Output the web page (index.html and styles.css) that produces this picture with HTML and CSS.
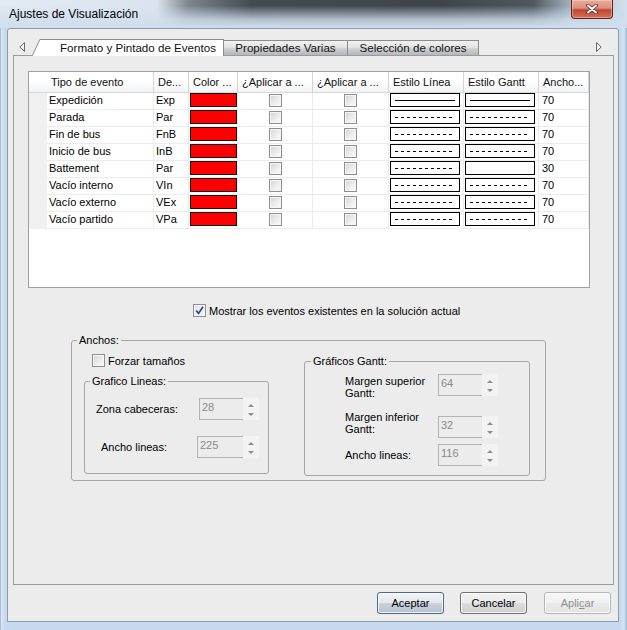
FILE: index.html
```html
<!DOCTYPE html>
<html lang="es">
<head>
<meta charset="utf-8">
<title>Ajustes de Visualización</title>
<link rel="stylesheet" href="styles.css">
</head>
<body>
<div class="window">
  <div class="titlebar">
    <span class="title">Ajustes de Visualización</span>
    <div class="close">
      <svg width="12" height="10" viewBox="0 0 12 10"><path d="M2 1.5 L10 8.5 M10 1.5 L2 8.5" stroke="#5b2b24" stroke-width="3.6" stroke-linecap="round"/><path d="M2 1.5 L10 8.5 M10 1.5 L2 8.5" stroke="#fff" stroke-width="2" stroke-linecap="round"/></svg>
    </div>
  </div>
  <div class="client">
    <div class="tabstrip">
      <svg class="arrow-l" width="6" height="10" viewBox="0 0 6 10"><path d="M5.5 0.5 L0.8 5 L5.5 9.5 Z" fill="#f4f4f4" stroke="#6a6a6a"/></svg>
      <div class="tabs">
        <svg class="slant" width="8" height="17" viewBox="0 0 8 17"><polygon points="0,17 8,0 8,17" fill="#fff"/><line x1="0.3" y1="16.8" x2="7.8" y2="0.5" stroke="#8c8c8c"/></svg>
        <div class="tab active">Formato y Pintado de Eventos</div>
        <div class="tab t2">Propiedades Varias</div>
        <div class="tab t3">Selección de colores</div>
      </div>
      <svg class="arrow-r" width="6" height="10" viewBox="0 0 6 10"><path d="M0.5 0.5 L5.2 5 L0.5 9.5 Z" fill="#f4f4f4" stroke="#6a6a6a"/></svg>
    </div>
    <div class="panel">
      <div class="grid">
        <div class="hrow">
          <div class="rh"></div>
          <div>Tipo de evento</div>
          <div>De...</div>
          <div>Color ...</div>
          <div>¿Aplicar a ...</div>
          <div>¿Aplicar a ...</div>
          <div>Estilo Línea</div>
          <div>Estilo Gantt</div>
          <div>Ancho...</div>
        </div>
        <div class="row">
          <div class="rh"></div><div class="txt">Expedición</div><div class="txt">Exp</div>
          <div><span class="swatch"></span></div>
          <div class="chk"><span class="cb"></span></div><div class="chk"><span class="cb"></span></div>
          <div><span class="lstyle"><span class="solid"></span></span></div>
          <div><span class="lstyle"><span class="solid"></span></span></div>
          <div class="num">70</div>
        </div>
        <div class="row">
          <div class="rh"></div><div class="txt">Parada</div><div class="txt">Par</div>
          <div><span class="swatch"></span></div>
          <div class="chk"><span class="cb"></span></div><div class="chk"><span class="cb"></span></div>
          <div><span class="lstyle"><span class="dash"></span></span></div>
          <div><span class="lstyle"><span class="dash"></span></span></div>
          <div class="num">70</div>
        </div>
        <div class="row">
          <div class="rh"></div><div class="txt">Fin de bus</div><div class="txt">FnB</div>
          <div><span class="swatch"></span></div>
          <div class="chk"><span class="cb"></span></div><div class="chk"><span class="cb"></span></div>
          <div><span class="lstyle"><span class="dash"></span></span></div>
          <div><span class="lstyle"><span class="dash"></span></span></div>
          <div class="num">70</div>
        </div>
        <div class="row">
          <div class="rh"></div><div class="txt">Inicio de bus</div><div class="txt">InB</div>
          <div><span class="swatch"></span></div>
          <div class="chk"><span class="cb"></span></div><div class="chk"><span class="cb"></span></div>
          <div><span class="lstyle"><span class="dash"></span></span></div>
          <div><span class="lstyle"><span class="dash"></span></span></div>
          <div class="num">70</div>
        </div>
        <div class="row">
          <div class="rh"></div><div class="txt">Battement</div><div class="txt">Par</div>
          <div><span class="swatch"></span></div>
          <div class="chk"><span class="cb"></span></div><div class="chk"><span class="cb"></span></div>
          <div><span class="lstyle"><span class="dash"></span></span></div>
          <div><span class="lstyle"></span></div>
          <div class="num">30</div>
        </div>
        <div class="row">
          <div class="rh"></div><div class="txt">Vacío interno</div><div class="txt">VIn</div>
          <div><span class="swatch"></span></div>
          <div class="chk"><span class="cb"></span></div><div class="chk"><span class="cb"></span></div>
          <div><span class="lstyle"><span class="dash"></span></span></div>
          <div><span class="lstyle"><span class="dash"></span></span></div>
          <div class="num">70</div>
        </div>
        <div class="row">
          <div class="rh"></div><div class="txt">Vacío externo</div><div class="txt">VEx</div>
          <div><span class="swatch"></span></div>
          <div class="chk"><span class="cb"></span></div><div class="chk"><span class="cb"></span></div>
          <div><span class="lstyle"><span class="dash"></span></span></div>
          <div><span class="lstyle"><span class="dash"></span></span></div>
          <div class="num">70</div>
        </div>
        <div class="row">
          <div class="rh"></div><div class="txt">Vacío partido</div><div class="txt">VPa</div>
          <div><span class="swatch"></span></div>
          <div class="chk"><span class="cb"></span></div><div class="chk"><span class="cb"></span></div>
          <div><span class="lstyle"><span class="dash"></span></span></div>
          <div><span class="lstyle"><span class="dash"></span></span></div>
          <div class="num">70</div>
        </div>
      </div>

      <div class="show">
        <span class="cb checked"><svg width="11" height="11" viewBox="0 0 11 11"><path d="M2.2 5.6 L4.6 8.4 L9 1.8" fill="none" stroke="#33479a" stroke-width="1.7"/></svg></span>
        <span>Mostrar los eventos existentes en la solución actual</span>
      </div>

      <div class="group anchos">
        <div class="legend">Anchos:</div>
        <div class="anchos-body">
          <div class="leftcol">
            <div class="forzar"><span class="cb"></span><span>Forzar tamaños</span></div>
            <div class="group lineas">
              <div class="legend">Grafico Lineas:</div>
              <div class="frow r1">
                <span class="lbl">Zona cabeceras:</span>
                <div class="spin"><span class="sbox w44">28</span><svg class="sbtn" width="16" height="22" viewBox="0 0 16 22"><path d="M5 9 L8 6 L11 9 Z M5 15 L11 15 L8 18 Z" fill="#8d8d8d"/></svg></div>
              </div>
              <div class="frow r2">
                <span class="lbl">Ancho lineas:</span>
                <div class="spin"><span class="sbox w46">225</span><svg class="sbtn" width="16" height="22" viewBox="0 0 16 22"><path d="M5 9 L8 6 L11 9 Z M5 15 L11 15 L8 18 Z" fill="#8d8d8d"/></svg></div>
              </div>
            </div>
          </div>
          <div class="group gantt">
            <div class="legend">Gráficos Gantt:</div>
            <div class="grow g1">
              <span class="glbl">Margen superior<br>Gantt:</span>
              <div class="spin"><span class="sbox w44">64</span><svg class="sbtn" width="16" height="22" viewBox="0 0 16 22"><path d="M5 9 L8 6 L11 9 Z M5 15 L11 15 L8 18 Z" fill="#8d8d8d"/></svg></div>
            </div>
            <div class="grow g2">
              <span class="glbl">Margen inferior<br>Gantt:</span>
              <div class="spin"><span class="sbox w44">32</span><svg class="sbtn" width="16" height="22" viewBox="0 0 16 22"><path d="M5 9 L8 6 L11 9 Z M5 15 L11 15 L8 18 Z" fill="#8d8d8d"/></svg></div>
            </div>
            <div class="grow g3">
              <span class="glbl">Ancho lineas:</span>
              <div class="spin"><span class="sbox w44">116</span><svg class="sbtn" width="16" height="22" viewBox="0 0 16 22"><path d="M5 9 L8 6 L11 9 Z M5 15 L11 15 L8 18 Z" fill="#8d8d8d"/></svg></div>
            </div>
          </div>
        </div>
      </div>
    </div>
    <div class="buttons">
      <div class="btn default">Aceptar</div>
      <div class="btn cancel">Cancelar</div>
      <div class="btn disabled">Apli<u>c</u>ar</div>
    </div>
  </div>
</div>
</body>
</html>
```
FILE: styles.css
```css
* { box-sizing: border-box; }
html, body { margin: 0; padding: 0; }
body {
  width: 627px; height: 630px; overflow: hidden;
  font-family: "Liberation Sans", Arial, sans-serif;
  font-size: 11px; color: #000;
  background: #c4d8ed;
}
.window {
  width: 627px; height: 630px;
  display: flex; flex-direction: column;
  background: linear-gradient(to right, #7d95b0 0, #dbe8f5 1px, #c6d9ee 5px, #c6d9ee 620px, #d4e3f2 624px, #9fb4ca 627px);
}

/* title bar */
.titlebar {
  height: 28px; flex: none;
  display: flex; align-items: flex-start;
  background:
    linear-gradient(to bottom, rgba(208,222,237,0) 0, rgba(208,222,237,0) 20%, rgba(208,222,237,.8) 70%, #d0deed 100%),
    linear-gradient(to right, #e2eaf3 0, #dbe4ee 25%, #7d8790 30%, #434b53 40%, #3d444c 70%, #4f5860 85%, #a4b2c0 91%, #d3e0ed 100%);
}
.title {
  margin-left: 9px; line-height: 28px;
  font-size: 12px; color: #000;
}
.close {
  margin: 0 14px 0 auto;
  width: 42px; height: 19px;
  border: 1px solid #5b241b; border-top: none;
  border-radius: 0 0 4px 4px;
  background: linear-gradient(#e9ab9d 0, #dc8f7f 45%, #c24530 55%, #d0705a 100%);
  box-shadow: inset 0 0 0 1px rgba(255,220,210,.45);
  display: flex; align-items: center; justify-content: center;
}

/* client area */
.client {
  flex: 1;
  margin: 0 8px 8px 7px;
  background: #ececec;
  border: 1px solid #8d9aa8;
  border-radius: 3px 3px 0 0;
  display: flex; flex-direction: column;
}
.tabstrip {
  height: 26px; flex: none;
  display: flex; align-items: flex-end;
}
.arrow-l { margin: 0 0 3px 11px; flex: none; }
.arrow-r { margin: 0 16px 3px auto; flex: none; }
.tabs {
  display: flex; align-items: flex-end;
  margin-left: 7px;
  position: relative; z-index: 1;
}
.slant { display: block; margin-bottom: -1px; flex: none; }
.tab {
  font-size: 11.6px; white-space: nowrap;
  border-top: 1px solid #8c8c8c; border-right: 1px solid #8c8c8c;
  color: #111;
}
.tab.active {
  width: 184px; height: 17px; margin-bottom: -1px;
  background: #fff;
  padding-left: 20px; line-height: 15px;
}
.tab.t2, .tab.t3 {
  height: 15px; line-height: 14px; text-align: center;
  background: linear-gradient(#f1f1f1 0, #e4e4e4 45%, #cfd1d3 55%, #b3b7bb 100%);
}
.tab.t2 { width: 124px; }
.tab.t3 { width: 131px; }

.panel {
  height: 530px; flex: none;
  margin: 0 4px 0 5px;
  border: 1px solid #9b9b9b;
  background: #ececec;
}

/* grid */
.grid {
  margin: 15px 0 0 14px;
  width: 562px; height: 217px;
  border: 1px solid #a0a0a0;
  background: #fff;
}
.hrow, .row {
  display: grid;
  grid-template-columns: 18px 107px 35px 49px 75px 76px 75px 75px 50px;
}
.hrow {
  height: 21px;
  border-bottom: 1px solid #d8d8d8;
  background: linear-gradient(#ffffff 0, #ffffff 45%, #f2f3f5 100%);
}
.hrow > div {
  border-right: 1px solid #d5d5d5;
  padding-left: 4px; line-height: 20px;
  white-space: nowrap; overflow: hidden;
  color: #111;
}
.hrow > .rh { border-right: none; }
.row { height: 17px; }
.row > div {
  height: 17px;
  border-right: 1px solid #ececec;
  border-bottom: 1px solid #ececec;
  white-space: nowrap; overflow: hidden;
}
.row > .rh { background: #f0f0f0; border-color: #f0f0f0; }
.row > .txt { padding-left: 2px; line-height: 15px; }
.row > .num { padding-left: 3px; line-height: 15px; }
.row > .chk { display: flex; justify-content: center; padding-top: 1px; }
.swatch {
  display: block; margin-left: 1px;
  width: 47px; height: 14px;
  background: #ff0000; border: 1px solid #111;
}
.lstyle {
  display: flex; align-items: center;
  margin-left: 1px;
  width: 70px; height: 14px;
  border: 1px solid #000;
  background: #fff;
  padding: 0 4px 0 4px;
}
.solid { display: block; width: 100%; height: 1px; background: #000; }
.dash {
  display: block; width: 100%; height: 1px;
  background: repeating-linear-gradient(to right, #000 0, #000 3px, transparent 3px, transparent 6px);
}

/* checkboxes */
.cb {
  display: inline-flex; align-items: center; justify-content: center;
  width: 13px; height: 13px; flex: none;
  border: 1px solid #8e8f8f;
  background: linear-gradient(135deg, #d3d3d3 0, #efefef 60%, #fafafa 100%);
  box-shadow: inset 0 0 0 1px #f6f6f6;
}
.cb.checked { background: linear-gradient(135deg, #dfe3ea 0, #f7f8fa 100%); }

.show {
  display: flex; align-items: center; gap: 3px;
  height: 13px;
  margin: 16px 0 0 179px;
  white-space: nowrap;
}

/* group boxes */
.group {
  border: 1px solid #a7a7a7;
  border-radius: 3px;
}
.legend {
  width: fit-content;
  margin: -7px 0 0 5px;
  padding: 0 2px;
  line-height: 13px;
  background: #ececec;
  white-space: nowrap;
}
.anchos {
  width: 475px; height: 141px;
  margin: 23px 0 0 57px;
}
.anchos-body { display: flex; align-items: flex-start; }
.leftcol { margin-left: 12px; }
.forzar {
  display: flex; align-items: center; gap: 3px;
  height: 13px; margin: 7px 0 0 8px;
}
.lineas {
  width: 185px; height: 93px;
  margin-top: 14px;
}
.frow {
  display: flex; align-items: center; justify-content: space-between;
  margin-right: 9px;
}
.frow.r1 { margin-top: 10px; padding-left: 11px; }
.frow.r2 { margin-top: 16px; padding-left: 16px; }

.gantt {
  width: 226px; height: 115px;
  margin: 14px 0 0 35px;
}
.gantt .legend { margin-left: 6px; }
.grow { display: flex; padding-left: 40px; }
.glbl { width: 93px; line-height: 12px; }
.grow.g1 { margin-top: 6px; align-items: flex-start; }
.grow.g1 .glbl { margin-top: 1px; }
.grow.g2 { margin-top: 12px; align-items: flex-start; }
.grow.g2 .spin { margin-top: 5px; }
.grow.g3 { margin-top: 6px; align-items: center; }

/* spin boxes */
.spin { display: flex; height: 22px; flex: none; }
.sbox {
  height: 22px;
  border: 1px solid #b3b3b3; border-right: none;
  background: #ececec;
  color: #8a8a8a;
  padding: 1px 0 0 2px; line-height: 14px;
}
.sbox.w44 { width: 44px; }
.sbox.w46 { width: 46px; }
.sbtn { display: block; background: #f3f3f3; }

/* buttons */
.buttons {
  display: flex; justify-content: flex-end;
  margin-top: 7px; padding-right: 7px;
}
.btn {
  width: 67px; height: 22px;
  border: 1px solid #707070; border-radius: 3px;
  background: linear-gradient(#f2f2f2 0, #ebebeb 50%, #dddddd 50%, #cfcfcf 100%);
  box-shadow: inset 0 0 0 1px rgba(255,255,255,.8);
  text-align: center; line-height: 20px;
  font-size: 11px;
}
.btn.default {
  margin-right: 16px;
  border-color: #4b6a8c;
  background: linear-gradient(#f2f5f8 0, #e3e8ee 50%, #cbd3dc 50%, #b8c3cf 100%);
}
.btn.cancel { margin-right: 17px; }
.btn.disabled {
  border-color: #b5b8bb;
  background: linear-gradient(#f6f6f6 0, #f1f1f1 50%, #e9e9e9 50%, #e4e4e4 100%);
  color: #8f8f8f;
}
.btn.disabled u { text-decoration-color: #8f8f8f; }
```
